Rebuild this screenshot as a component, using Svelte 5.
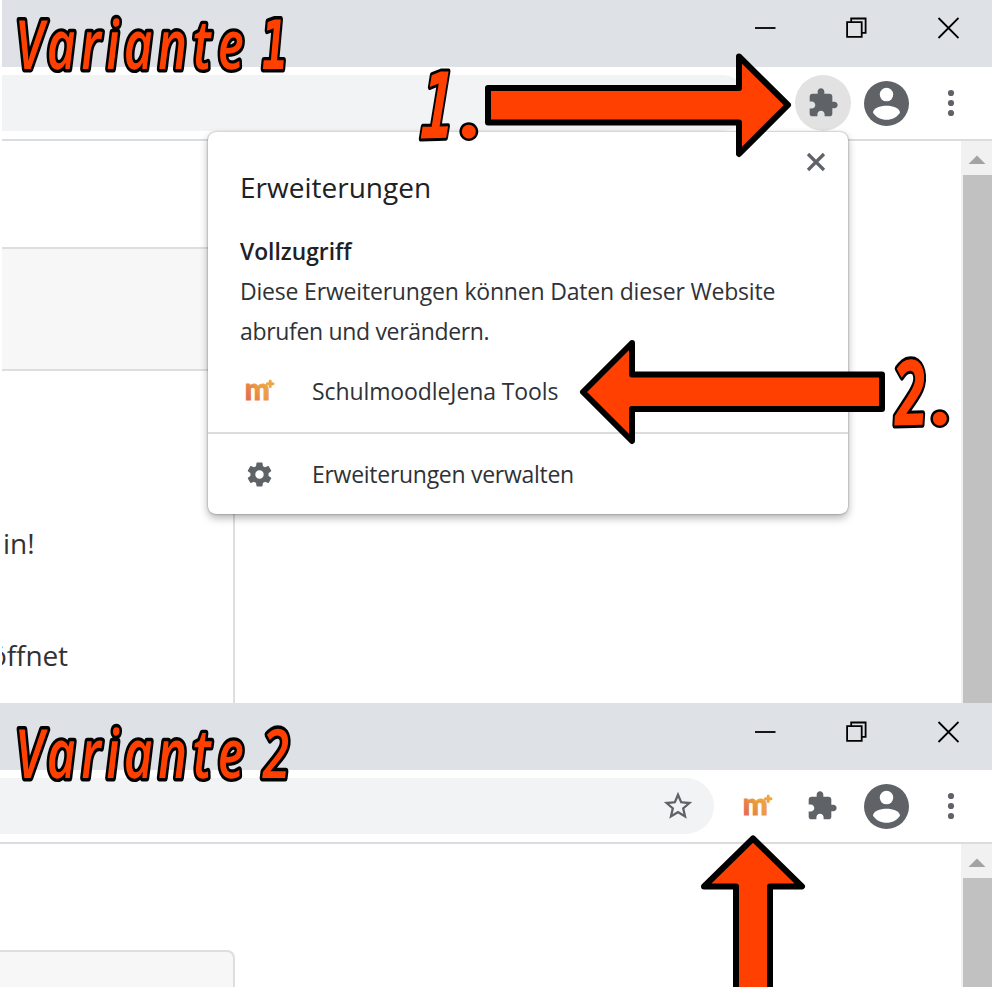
<script>
  const puzzle =
    'M20.5 11H19V7c0-1.1-.9-2-2-2h-4V3.5C13 2.12 11.88 1 10.5 1S8 2.12 8 3.5V5H4c-1.1 0-1.99.9-1.99 2v3.8H3.5c1.49 0 2.7 1.21 2.7 2.7s-1.21 2.7-2.7 2.7H2V20c0 1.1.9 2 2 2h3.8v-1.5c0-1.49 1.21-2.7 2.7-2.7 1.49 0 2.7 1.21 2.7 2.7V22H17c1.1 0 2-.9 2-2v-4h1.5c1.38 0 2.5-1.12 2.5-2.5S21.88 11 20.5 11z';
  const gear =
    'M19.43 12.98c.04-.32.07-.64.07-.98s-.03-.66-.07-.98l2.11-1.65c.19-.15.24-.42.12-.64l-2-3.46c-.12-.22-.39-.3-.61-.22l-2.49 1c-.52-.4-1.08-.73-1.69-.98l-.38-2.65C14.46 2.18 14.25 2 14 2h-4c-.25 0-.46.18-.49.42l-.38 2.65c-.61.25-1.17.59-1.69.98l-2.49-1c-.23-.09-.49 0-.61.22l-2 3.46c-.13.22-.07.49.12.64l2.11 1.65c-.04.32-.07.65-.07.98s.03.66.07.98l-2.11 1.65c-.19.15-.24.42-.12.64l2 3.46c.12.22.39.3.61.22l2.49-1c.52.4 1.08.73 1.69.98l.38 2.65c.03.24.24.42.49.42h4c.25 0 .46-.18.49-.42l.38-2.65c.61-.25 1.17-.59 1.69-.98l2.49 1c.23.09.49 0 .61-.22l2-3.46c.12-.22.07-.49-.12-.64l-2.11-1.65zM12 15.5c-1.93 0-3.5-1.57-3.5-3.5s1.57-3.5 3.5-3.5 3.5 1.57 3.5 3.5-1.57 3.5-3.5 3.5z';
</script>

{#snippet titlebar()}
  <header class="titlebar">
    <svg width="22" height="22" viewBox="0 0 22 22"><path d="M1 11H21.500" /></svg>
    <svg width="22" height="22" viewBox="0 0 22 22"><path d="M1.1 5.2h14.6v14.6H1.100zM5.200 5V1.500h14.400v14.400h-3.600" /></svg>
    <svg width="22" height="22" viewBox="0 0 22 22"><path d="M1.500 1l20 20M21.500 1L1.500 21" /></svg>
  </header>
{/snippet}

{#snippet logo()}
  <svg class="logo" width="32" height="32" viewBox="0 0 32 32">
    <defs>
      <linearGradient id="warm" x1="0" y1="1" x2="1" y2="0">
        <stop offset="0.2" stop-color="#e4704f" />
        <stop offset="0.5" stop-color="#ec983f" />
        <stop offset="1" stop-color="#efb24a" />
      </linearGradient>
    </defs>
    <text x="0.8" y="25.300" textLength="25" lengthAdjust="spacingAndGlyphs">m</text>
    <path d="M26.200 6v5.600M23.400 8.800h5.600" stroke="#eda843" stroke-width="3" stroke-linecap="round" />
  </svg>
{/snippet}

{#snippet actions(active)}
  <span class="ext" class:active>
    <svg width="32" height="32" viewBox="0 0 24 24"><path d={puzzle} /></svg>
  </span>
  <svg class="account" width="45" height="45" viewBox="0 0 44 44">
    <circle cx="22" cy="22" r="22" />
    <circle cx="22" cy="13.3" r="6.6" fill="#fff" />
    <path d="M8.800 31c0-4.200 7-6.800 13.200-6.800S35.200 26.800 35.200 31c-3 4.500-7.700 6.900-13.200 6.900S11.800 35.500 8.800 31z" fill="#fff" />
  </svg>
  <svg class="dots" width="8" height="28" viewBox="0 0 8 28">
    <circle cx="4" cy="4" r="3.1" /><circle cx="4" cy="14" r="3.1" /><circle cx="4" cy="24" r="3.1" />
  </svg>
{/snippet}

{#snippet scrollbar()}
  <aside class="scroll">
    <svg width="18" height="9" viewBox="0 0 18 9"><path d="M0.500 9L9 .5L17.500 9z" /></svg>
    <div class="thumb"></div>
  </aside>
{/snippet}

<main>
  <section class="first">
    {@render titlebar()}
    <nav class="toolbar">
      <div class="omnibox"></div>
      {@render actions(true)}
    </nav>
    <div class="content">
      <div class="page">
        <div class="block"></div>
        <div class="column">
          <p class="line one"><span>in!</span></p>
          <p class="line two"><span>öffnet</span></p>
        </div>
      </div>
      {@render scrollbar()}
    </div>

    <div class="popup">
      <div class="info">
        <svg class="close" width="20" height="20" viewBox="0 0 20 20"><path d="M2 2l16 16M18 2L2 18" /></svg>
        <h1>Erweiterungen</h1>
        <h2>Vollzugriff</h2>
        <p><span class="l1">Diese Erweiterungen können Daten dieser Website</span><br /><span class="l2">abrufen und verändern.</span></p>
        <div class="item">{@render logo()}<span class="tools">SchulmoodleJena Tools</span></div>
      </div>
      <div class="item manage">
        <svg class="gear" width="29" height="29" viewBox="0 0 24 24"><path d={gear} /></svg>
        <span class="verw">Erweiterungen verwalten</span>
      </div>
    </div>
  </section>

  <section class="second">
    {@render titlebar()}
    <nav class="toolbar">
      <div class="omnibox">
        <svg width="34" height="34" viewBox="0 0 24 24"><path d="M22 9.240l-7.190-.62L12 2 9.190 8.630 2 9.240l5.460 4.730L5.820 21 12 17.270 18.180 21l-1.630-7.030L22 9.240zM12 15.400l-3.760 2.270 1-4.280-3.320-2.880 4.380-.38L12 6.100l1.710 4.040 4.380.38-3.320 2.880 1 4.280L12 15.400z" /></svg>
      </div>
      {@render logo()}
      {@render actions(false)}
    </nav>
    <div class="content">
      <div class="page"><div class="block card"></div></div>
      {@render scrollbar()}
    </div>
  </section>

  <svg class="marks" width="992" height="987" viewBox="0 0 992 987">
    <g class="arrows">
      <path d="M488 88H739V56.500L788 105L739 154V122.500H488z" />
      <path d="M882 374.500H632V343L583 392L632 441V409H882z" />
      <path d="M736 995V886.500H704L753 838.500L802 886.500H770V995z" />
    </g>
    <g class="label" transform="translate(0 69) skewX(2) scale(.74 1)">
      <text x="22 64 110 144 168 214 261 295 330">Variante <tspan class="mono" x="354" textLength="36" lengthAdjust="spacingAndGlyphs">1</tspan></text>
    </g>
    <g class="label" transform="translate(0 778) skewX(2) scale(.74 1)">
      <text x="22 64 110 144 168 214 261 295 330 355">Variante 2</text>
    </g>
    <g class="label big" transform="translate(422 138.500) rotate(-1.500) skewX(-4) scale(.62 1)">
      <text class="mono" x="-4">1</text>
    </g>
    <g class="label big dot"><text x="460.500" y="138">.</text></g>
    <g class="label big" transform="translate(893 425.500) rotate(-1.500) skewX(3) scale(.66 1)">
      <text x="4">2</text>
    </g>
    <g class="label big dot"><text x="931.500" y="425">.</text></g>
  </svg>
</main>

<style>
  :global(body) { margin: 0; background: #fff; }
  main {
    position: relative; width: 992px; height: 987px; overflow: hidden;
    display: flex; flex-direction: column; background: #fff;
    font-family: "Open Sans", "Noto Sans", sans-serif; color: #303236;
  }
  section { position: relative; display: flex; flex-direction: column; box-sizing: border-box; }
  .first { height: 703.400px; padding-left: 2px; }
  .second { height: 283.600px; overflow: hidden; }
  svg { display: block; flex: none; }
  .titlebar {
    height: 67px; flex: none; box-sizing: border-box; background: #dee1e6;
    display: flex; justify-content: flex-end; gap: 70px; padding: 17px 33px 0 0;
  }
  .second .titlebar { padding-top: 17.600px; }
  .titlebar svg { fill: none; stroke: #000; stroke-width: 1.800; }
  .titlebar svg:nth-child(2) { margin-right: -1px; }
  .toolbar {
    height: 74px; flex: none; box-sizing: border-box; padding: 8px 37px 8px 0;
    border-bottom: 2px solid #dadce0; display: flex; align-items: center;
  }
  .omnibox {
    flex: none; width: 748px; height: 56px; background: #f1f3f4; border-radius: 0 28px 28px 0;
    margin-right: 44.500px; box-sizing: border-box;
    display: flex; align-items: center; justify-content: flex-end; padding-right: 19px;
  }
  .second .omnibox { width: 714px; margin-right: 28px; }
  .omnibox svg { fill: #5f6368; }
  .ext { width: 56px; height: 56px; border-radius: 50%; display: flex; align-items: center; justify-content: center; flex: none; margin-right: 13.500px; }
  .second .ext { margin-left: 20.300px; }
  .ext.active { background: #e2e2e2; }
  .ext svg, .account, .dots, .gear { fill: #5f6368; }
  .dots { margin-left: auto; }
  .content { flex: 1; display: flex; min-height: 0; }
  .page { flex: 1; display: flex; flex-direction: column; padding-top: 106px; overflow: hidden; }
  .block { width: 231px; height: 120px; flex: none; background: #f7f7f7; border: solid #dedede; border-width: 2px 0; }
  .card { border-width: 2px 2px 2px 0; border-radius: 0 8px 0 0; width: 233px; height: 150px; }
  .column { width: 231px; flex: 1; border-right: 2px solid #dedede; overflow: hidden; display: flex; flex-direction: column; }
  .line { margin: 0; font-size: 28px; line-height: 40px; white-space: nowrap; }
  .one { margin-top: 152px; padding-left: 1px; }
  .two { margin-top: 72px; margin-left: -12px; letter-spacing: -.1px; }
  .scroll { width: 31px; background: #f1f1f1; display: flex; flex-direction: column; align-items: flex-end; }
  .scroll svg { margin: 13.500px 6px 11.500px 0; fill: #a3a3a3; }
  .thumb { width: 29px; flex: 1; background: #c1c1c1; }
  .popup {
    position: absolute; left: 208px; top: 132px; width: 640px; height: 382px; background: #fff;
    border-radius: 8px; box-shadow: 0 0 2px rgba(0,0,0,.45), 0 4px 8px rgba(0,0,0,.3);
    display: flex; flex-direction: column;
  }
  .info { position: relative; height: 300px; border-bottom: 2px solid #dadce0; padding: 0 32px; }
  .close { position: absolute; right: 22px; top: 20px; stroke: #5f6368; stroke-width: 3.200; }
  h1, h2, p { margin: 0; font-weight: 400; white-space: nowrap; }
  h1 { font-size: 28px; line-height: 40px; padding-top: 35px; color: #202124; }
  h2 { font-size: 22.800px; line-height: 40px; font-weight: 600; margin-top: 25px; color: #202124; }
  .info p, .item { font-size: 23px; line-height: 40px; }
  .info p { margin-top: -1px; }
  .l1 { letter-spacing: -.19px; }
  .l2 { letter-spacing: -.33px; }
  .tools { letter-spacing: -.1px; }
  .verw { letter-spacing: -.28px; }
  .item { display: flex; align-items: center; height: 40px; gap: 36px; white-space: nowrap; }
  .info .item { margin-top: 20px; padding-left: 4px; }
  .manage { padding: 20px 0 0 37px; gap: 38px; }
  .logo { overflow: visible; }
  .logo text { font: 900 30px/1 "Lato", sans-serif; fill: url(#warm); stroke: url(#warm); stroke-width: .9; }
  .marks { position: absolute; left: 0; top: 0; }
  .arrows path { fill: #ff4000; stroke: #000; stroke-width: 6; stroke-linejoin: round; }
  .label { font: italic 600 68px "Open Sans", sans-serif; fill: #ff4000; stroke: #000; stroke-width: 6; stroke-linejoin: round; }
  .label text { paint-order: stroke; vector-effect: non-scaling-stroke; }
  .label tspan { vector-effect: non-scaling-stroke; }
  .mono { font-family: "DejaVu Sans Mono", monospace; font-weight: 700; }
  .big { font-size: 91px; font-weight: 700; stroke-width: 5; }
  .dot { font-family: "Lato", sans-serif; }
</style>
